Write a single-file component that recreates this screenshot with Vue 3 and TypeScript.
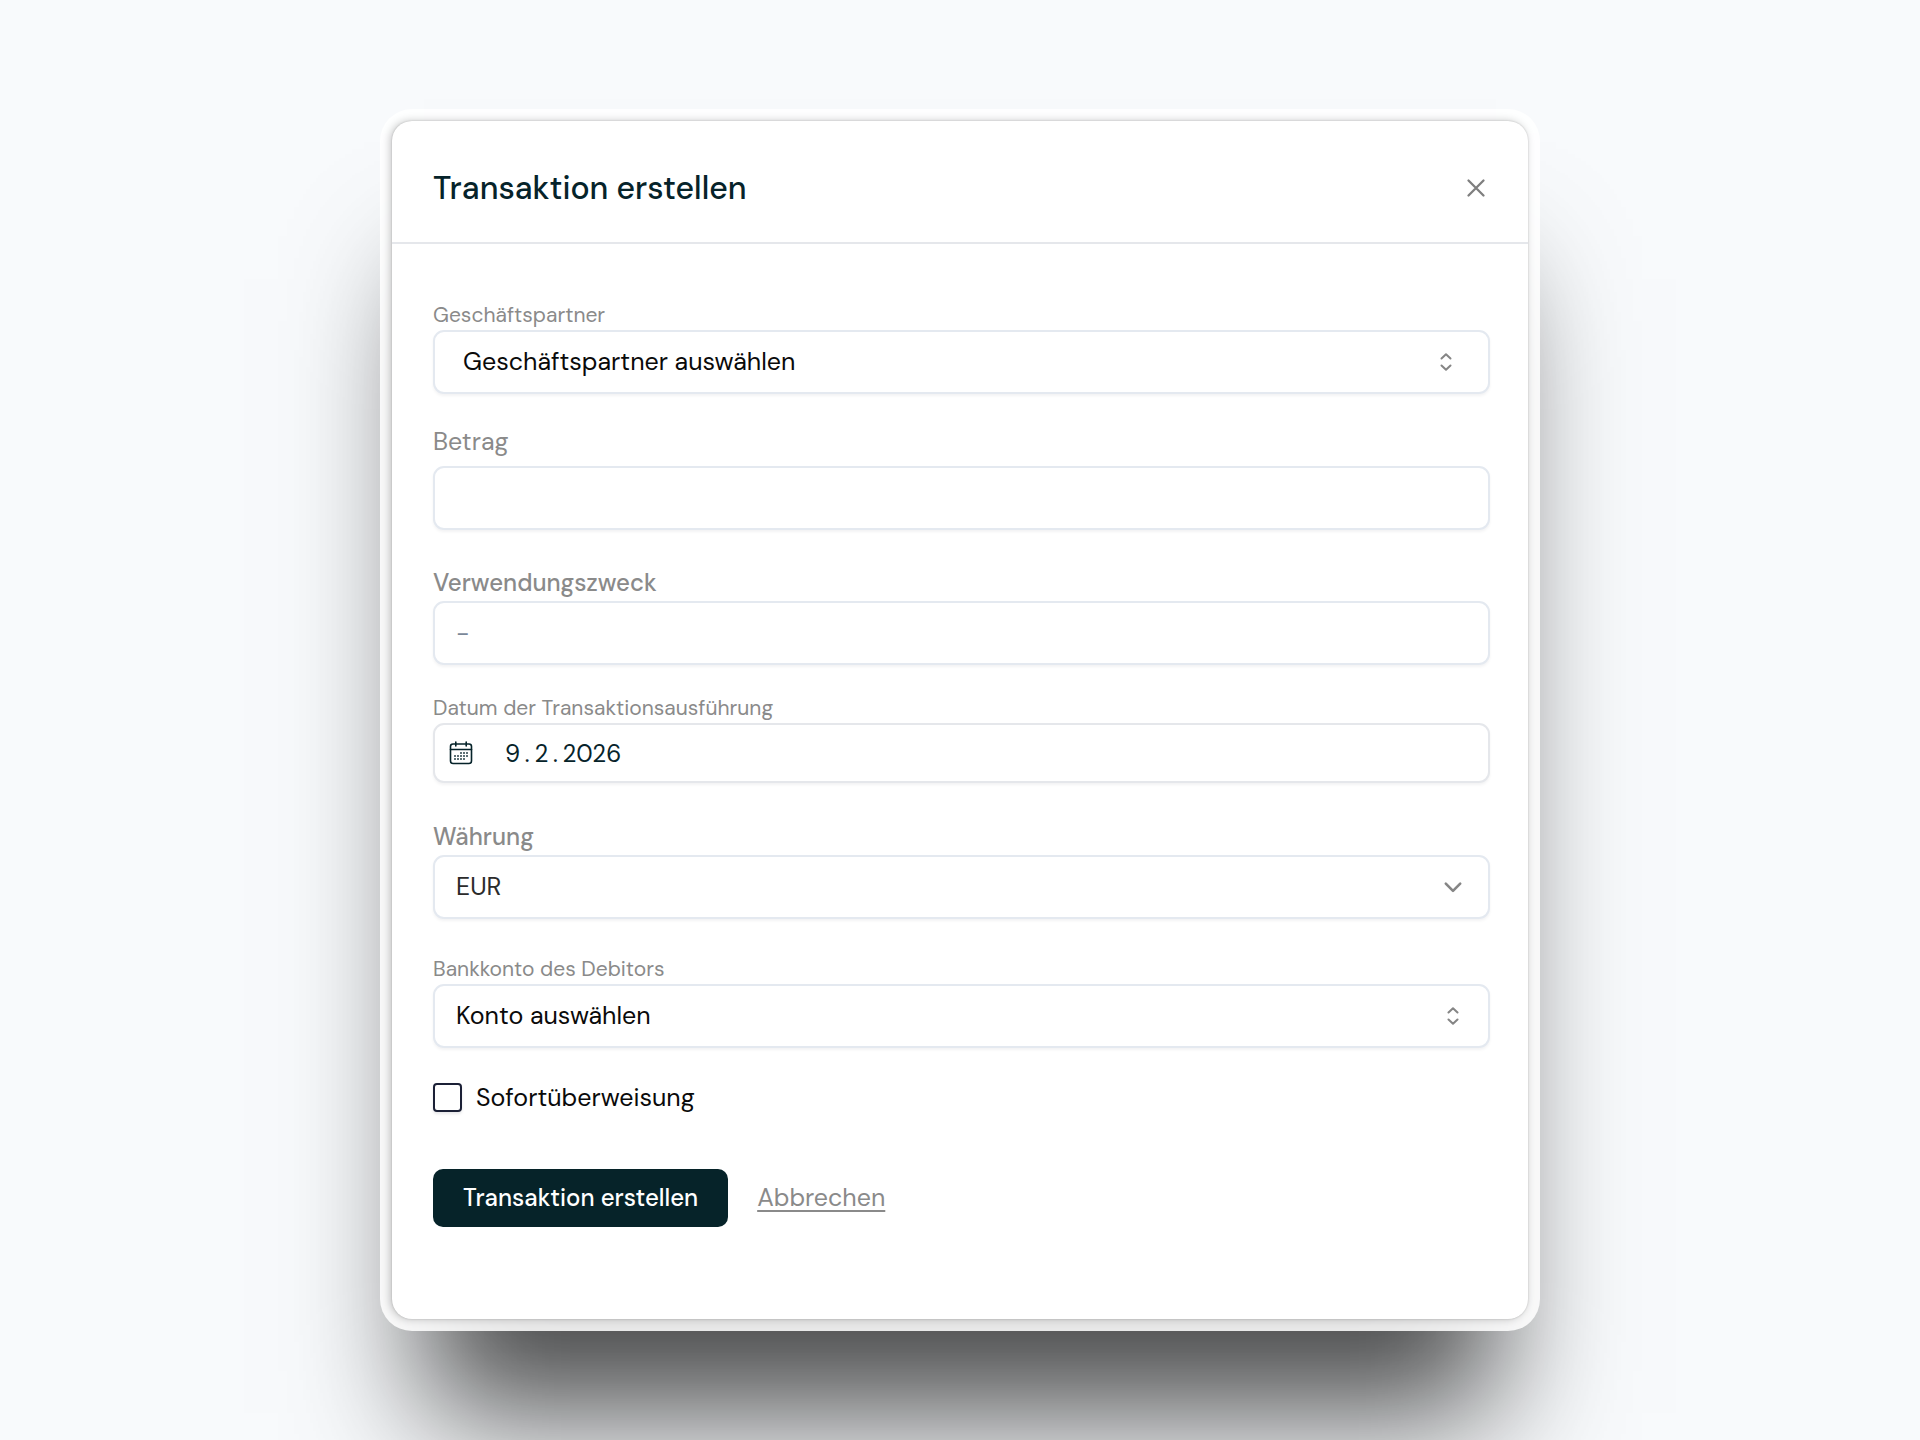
<script setup lang="ts">
import { ref } from 'vue'

const partner = ref('')
const amount = ref('')
const purpose = ref('')
// Thin spaces set the date segments apart
const date = ref('9\u2009.\u20092\u2009.\u20092026')
const currency = ref('EUR')
const account = ref('')
const instant = ref(false)

const calendarDots: [number, number][] = [
  [12, 12], [15, 12], [18, 12],
  [6, 15], [9, 15], [12, 15], [15, 15], [18, 15],
  [6, 18], [9, 18], [12, 18], [15, 18],
]
</script>

<template>
  <main class="page">
    <section class="dialog" role="dialog" aria-labelledby="dialog-title">
      <header class="dialog-header">
        <h1 id="dialog-title">Transaktion erstellen</h1>
        <button type="button" class="close" aria-label="Schließen">
          <svg width="20" height="20" viewBox="0 0 20 20" fill="none" stroke="currentColor" stroke-width="2.3" stroke-linecap="round">
            <path d="M2.5 2.5 17.5 17.5M17.5 2.5 2.5 17.5" />
          </svg>
        </button>
      </header>

      <form class="form" @submit.prevent>
        <div class="field">
          <label class="small" for="partner">Geschäftspartner</label>
          <div class="control inset">
            <select id="partner" v-model="partner">
              <option value="">Geschäftspartner auswählen</option>
            </select>
            <svg class="arrow" width="20" height="20" viewBox="0 0 20 20" fill="none" stroke="currentColor" stroke-width="2" stroke-linecap="round" stroke-linejoin="round">
              <path d="M5.5 6.5 10 2.2 14.5 6.5M5.5 13.5 10 17.8 14.5 13.5" />
            </svg>
          </div>
        </div>

        <div class="field spaced">
          <label for="amount">Betrag</label>
          <div class="control">
            <input id="amount" v-model="amount" type="text" inputmode="decimal" />
          </div>
        </div>

        <div class="field">
          <label class="strong" for="purpose">Verwendungszweck</label>
          <div class="control">
            <input id="purpose" v-model="purpose" type="text" placeholder="-" />
          </div>
        </div>

        <div class="field compact">
          <label class="small" for="date">Datum der Transaktionsausführung</label>
          <div class="control date">
            <svg class="calendar" width="24" height="24" viewBox="0 0 24 24" fill="none" stroke="currentColor" stroke-width="1.6" stroke-linecap="round">
              <rect x="1.5" y="3" width="21" height="19.5" rx="2.5" />
              <path d="M1.5 8.5h21M6.8 1v4M17.2 1v4" />
              <rect
                v-for="([x, y], i) in calendarDots"
                :key="i"
                :x="x - 0.8"
                :y="y - 0.8"
                width="1.6"
                height="1.6"
                fill="currentColor"
                stroke="none"
              />
            </svg>
            <input id="date" v-model="date" type="text" />
          </div>
        </div>

        <div class="field">
          <label class="strong" for="currency">Währung</label>
          <div class="control soft">
            <select id="currency" v-model="currency">
              <option value="EUR">EUR</option>
            </select>
            <svg class="arrow" width="20" height="20" viewBox="0 0 20 20" fill="none" stroke="currentColor" stroke-width="2.6" stroke-linecap="round" stroke-linejoin="round">
              <path d="M2.8 6.6 10 13.8 17.2 6.6" />
            </svg>
          </div>
        </div>

        <div class="field">
          <label class="small" for="account">Bankkonto des Debitors</label>
          <div class="control">
            <select id="account" v-model="account">
              <option value="">Konto auswählen</option>
            </select>
            <svg class="arrow" width="20" height="20" viewBox="0 0 20 20" fill="none" stroke="currentColor" stroke-width="2" stroke-linecap="round" stroke-linejoin="round">
              <path d="M5.5 6.5 10 2.2 14.5 6.5M5.5 13.5 10 17.8 14.5 13.5" />
            </svg>
          </div>
        </div>

        <label class="check" for="instant">
          <input id="instant" v-model="instant" type="checkbox" />
          <span>Sofortüberweisung</span>
        </label>

        <div class="actions">
          <button type="submit" class="primary">Transaktion erstellen</button>
          <a href="#" class="cancel">Abbrechen</a>
        </div>
      </form>
    </section>
  </main>
</template>

<style>
body {
  margin: 0;
  background: #f8fafc;
}
</style>

<style scoped>
.page {
  box-sizing: border-box;
  min-height: 100vh;
  padding: 40px;
  display: grid;
  grid-template-columns: minmax(0, 1136px);
  place-content: center;
  overflow: hidden;
  font-family: "DM Sans", Inter, "Open Sans", sans-serif;
  font-size: 25px;
  line-height: 28px;
  color: #0a0a0a;
}

.dialog {
  border-radius: 20px;
  background: #fff;
  box-shadow:
    0 0 2px rgba(0, 0, 0, 0.2),
    -2px 0 8px rgba(0, 0, 0, 0.22),
    0 0 0 12px rgba(255, 255, 255, 0.86),
    0 126px 120px -32px rgba(0, 0, 0, 0.7);
}

.dialog-header {
  display: flex;
  align-items: center;
  justify-content: space-between;
  padding: 43px 40px 30px 41px;
  border-bottom: 2px solid #e5e7eb;
}

h1 {
  margin: 0;
  font-size: 32px;
  line-height: 48px;
  font-weight: 500;
  color: #06232a;
}

button,
input,
select {
  font: inherit;
  color: inherit;
}

.close {
  display: flex;
  padding: 2px;
  border: 0;
  background: none;
  color: #7f7f7f;
  cursor: pointer;
}

.form {
  display: flex;
  flex-direction: column;
  gap: 38px;
  padding: 59px 38px 92px 41px;
}

.field {
  display: flex;
  flex-direction: column;
  gap: 3px;
}

.field.spaced {
  gap: 9px;
  margin-top: -5px;
}

.field.compact {
  margin: -7px 0 1px;
}

.field label {
  line-height: 30px;
  color: #8a8a8a;
}

.field label.small {
  font-size: 21px;
  line-height: 24px;
}

.field label.strong {
  font-size: 24px;
  font-weight: 500;
}

.control {
  display: grid;
  grid-template-columns: minmax(0, 1fr);
  align-items: center;
  height: 60px;
  border: 2px solid #e4e9f0;
  border-radius: 11px;
  background: #fff;
  box-shadow: 0 2px 3px rgba(15, 23, 42, 0.05);
}

.control input,
.control select {
  grid-area: 1 / 1;
  box-sizing: border-box;
  width: 100%;
  height: 100%;
  margin: 0;
  padding: 0 21px;
  border: 0;
  border-radius: 9px;
  outline: none;
  appearance: none;
  background: transparent;
}

.control.inset select {
  padding: 0 28px;
}

.control input::placeholder {
  color: #7b8798;
  opacity: 1;
}

.control.soft {
  color: #2b2b2b;
}

.control.date {
  grid-template-columns: auto minmax(0, 1fr);
  height: 56px;
  padding-left: 14px;
  border-color: #e5e7eb;
  color: #06232a;
}

.control.date input {
  grid-area: auto;
  padding: 0 32px;
  font-size: 24px;
}

.arrow {
  grid-area: 1 / 1;
  justify-self: end;
  margin-right: 25px;
  color: #858585;
  pointer-events: none;
}

.inset .arrow {
  margin-right: 32px;
}

.check {
  display: flex;
  align-items: center;
  gap: 14px;
  margin-top: -3px;
}

.check input {
  flex: none;
  width: 29px;
  height: 29px;
  margin: 0;
  border: 2px solid #1b2036;
  border-radius: 4px;
  appearance: none;
  background: #fff;
  box-shadow: 0 2px 3px rgba(15, 23, 42, 0.1);
}

.check input:checked {
  background: #06232a;
}

.actions {
  display: flex;
  align-items: center;
  gap: 29px;
  margin-top: 19px;
}

.primary {
  padding: 15px 30px;
  border: 0;
  border-radius: 10px;
  background: #062329;
  color: #fff;
  font-size: 24px;
  font-weight: 500;
  cursor: pointer;
}

.cancel {
  color: #8a8a8a;
  text-decoration: underline;
  text-decoration-thickness: 2px;
  text-underline-offset: 4px;
}
</style>
